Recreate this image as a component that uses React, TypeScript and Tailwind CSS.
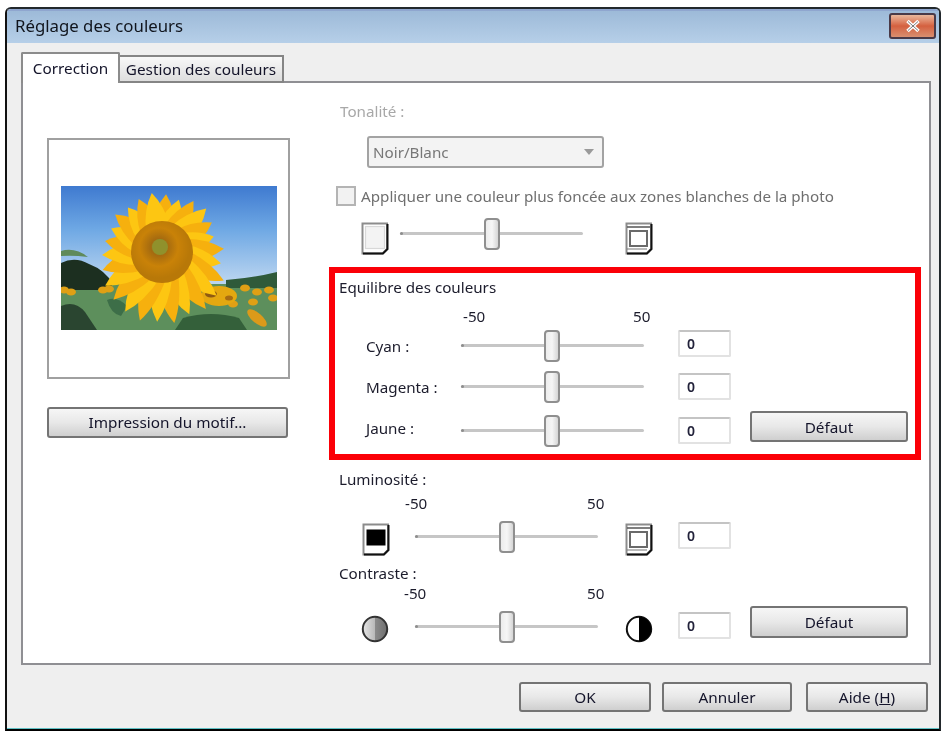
import type { ReactNode } from "react";

const FONT = "font-['Noto_Sans','DejaVu_Sans',sans-serif]";

const Btn = ({ className, children }: { className: string; children: ReactNode }) => (
  <div className={`flex items-center justify-center rounded-[3px] border-2 border-[#747474] bg-gradient-to-b from-[#f6f6f6] via-[#e8e8e8] to-[#cfcfcf] text-[15.3px] text-[#14142a] ${className}`}>
    {children}
  </div>
);

const Slider = ({ className, thumb }: { className: string; thumb: string }) => (
  <div className={`relative h-[32px] ${className}`}>
    <div className="absolute inset-x-0 top-[14px] h-[3px] rounded-full bg-[#c6c6c6]" />
    <div className="absolute left-0 top-[14px] h-[3px] w-[3px] rounded-full bg-[#8e8e8e]" />
    <div className={`absolute top-0 h-[32px] w-[16px] rounded-[4px] border-2 border-[#8f8f8f] bg-gradient-to-r from-[#ececec] via-[#f6f6f6] to-[#d6d6d6] ${thumb}`} />
  </div>
);

const ValueBox = ({ className }: { className: string }) => (
  <div className={`flex h-[27px] w-[53px] items-center rounded-[2px] border-2 border-[#e2e2e2] border-t-[#c4c4c4] bg-white pl-[7px] text-[14px] font-semibold text-[#22223a] ${className}`}>
    0
  </div>
);

const Page = ({ dark, filled }: { dark?: boolean; filled?: boolean }) => (
  <svg width="28" height="33" viewBox="0 0 28 33" className="shrink-0">
    <path d="M1.5 1.5 H26 V27 L21.5 31.5 H1.5 Z" fill="#fff" stroke="#8c8c8c" strokeWidth="2" />
    <path d="M26.5 2 V27 L22 31.5 H2" fill="none" stroke="#111" strokeWidth="2" />
    {filled && <rect x="4.5" y="6.5" width="19" height="16" fill="#000" />}
    {dark && (
      <>
        <path d="M2 5 H25" stroke="#555" strokeWidth="1.6" />
        <rect x="5" y="9" width="17" height="15" fill="#fff" stroke="#6a6a6a" strokeWidth="2" />
        <path d="M2 27 H22" stroke="#777" strokeWidth="1.2" />
      </>
    )}
    {!dark && !filled && <rect x="4.5" y="4.5" width="19" height="22" fill="#f3f3f3" stroke="#d8d8d8" strokeWidth="1.2" />}
  </svg>
);

const HalfCircle = ({ soft }: { soft?: boolean }) => (
  <svg width="28" height="28" viewBox="0 0 28 28" className="shrink-0">
    <defs>
      <linearGradient id="softc" x1="0" x2="1" y1="0" y2="0">
        <stop offset="0" stopColor="#e6e6e6" />
        <stop offset="0.5" stopColor="#b8b8b8" />
        <stop offset="0.5" stopColor="#8b8b8b" />
        <stop offset="1" stopColor="#6f6f6f" />
      </linearGradient>
    </defs>
    {soft ? (
      <circle cx="14" cy="14" r="12.2" fill="url(#softc)" stroke="#333" strokeWidth="2" />
    ) : (
      <>
        <circle cx="14" cy="14" r="12.2" fill="#fff" stroke="#111" strokeWidth="2" />
        <path d="M14 1.8 A12.2 12.2 0 0 1 14 26.2 Z" fill="#000" />
      </>
    )}
  </svg>
);

// petal length per angle, longer towards the lower right like the photo
const petalLens = [58, 55, 60, 62, 58, 54, 62, 60, 68, 70, 72, 68, 72, 70, 72, 70, 68, 66, 62, 60, 58, 56, 60, 56, 58, 60];

const Sunflower = () => (
  <svg width="216" height="144" viewBox="0 0 216 144" className="block">
    <defs>
      <linearGradient id="sky" x1="0" x2="0" y1="0" y2="1">
        <stop offset="0" stopColor="#3f7ad0" />
        <stop offset="0.3" stopColor="#6ea8e4" />
        <stop offset="0.66" stopColor="#b9d4f0" />
      </linearGradient>
      <radialGradient id="disc" cx="0.45" cy="0.42">
        <stop offset="0" stopColor="#a3a032" />
        <stop offset="0.26" stopColor="#a46a10" />
        <stop offset="0.62" stopColor="#c98208" />
        <stop offset="1" stopColor="#b87808" />
      </radialGradient>
    </defs>
    <rect width="216" height="144" fill="url(#sky)" />
    <path d="M0 98 H216 V144 H0 Z" fill="#5d8f5c" />
    <path d="M0 77 Q14 70 28 78 Q44 84 52 98 L46 104 H0 Z" fill="#1c2f20" />
    <path d="M0 65 Q14 61 27 71 Q12 69 0 70 Z" fill="#5f8a5a" />
    <path d="M165 94 Q192 92 216 86 V102 H165 Z" fill="#2f5a3a" />
    <path d="M0 120 Q14 114 24 126 L36 144 H0 Z" fill="#2a4530" />
    <path d="M46 114 Q56 110 66 120 L60 130 Q50 128 46 114 Z" fill="#3d6e48" />
    <path d="M122 132 Q150 124 178 132 L186 144 H114 Z" fill="#34603a" />
    {[[3, 104], [10, 106], [42, 104], [48, 103], [184, 102], [196, 106], [208, 104], [212, 112], [192, 116], [172, 118]].map(([x, y], i) => (
      <ellipse key={i} cx={x} cy={y} rx="5" ry="3.5" fill="#dfa015" />
    ))}
    <ellipse cx="196" cy="132" rx="12" ry="5" transform="rotate(40 196 132)" fill="#dc9a1a" />
    <ellipse cx="158" cy="110" rx="18" ry="10" fill="#e4a810" />
    <ellipse cx="150" cy="108" rx="6" ry="3.5" fill="#8f5a12" />
    <ellipse cx="168" cy="112" rx="4" ry="2.5" fill="#a86c12" />
    {petalLens.map((len, i) => (
      <path
        key={i}
        d={`M-12 -24 Q-11 ${-len * 0.74} 0 ${-len} Q11 ${-len * 0.74} 12 -24 Z`}
        transform={`translate(101 66) rotate(${(i * 360) / 26 + 4})`}
        fill={i % 2 ? "#fdc612" : "#f6b00e"}
      />
    ))}
    <circle cx="101" cy="66" r="31" fill="url(#disc)" />
    <circle cx="99" cy="61" r="8" fill="#90912c" />
  </svg>
);

export default function App() {
  return (
    <div className={`h-[737px] w-[948px] bg-white pl-[5px] pt-[7px] blur-[0.4px] ${FONT}`}>
      <div className="flex h-[724px] w-[936px] flex-col overflow-hidden rounded-t-[6px] border-2 border-[#22282c] border-b-black border-l-[#111]">
        {/* title bar */}
        <div className="flex h-[34px] shrink-0 items-start justify-between border-t-2 border-[#8fa6cf] bg-gradient-to-b from-[#9dbad8] to-[#b6cfe8] pl-[8px]">
          <span className="mt-[5px] text-[16.8px] leading-[20px] text-[#10141c]">Réglage des couleurs</span>
          <div className="mr-[3px] mt-[2px] flex h-[26px] w-[47px] items-center justify-center rounded-[3px] border-2 border-[#4a3a48] bg-gradient-to-b from-[#e9b89d] via-[#d4603f] to-[#d98f70]">
            <svg width="16" height="14" viewBox="0 0 16 14">
              <path d="M2.5 2 L13.5 12 M13.5 2 L2.5 12" stroke="#fff" strokeWidth="3.6" />
              <path d="M3 2.5 L13 11.5 M13 2.5 L3 11.5" stroke="#555" strokeWidth="0.8" />
            </svg>
          </div>
        </div>

        {/* dialog body */}
        <div className="flex flex-1 flex-col border-b border-[#5fc0c4] bg-[#efefef] pl-[14px] pr-[8px]">
          <div className="relative z-10 -mb-[2px] flex h-[40px] items-end">
            <div className="flex h-[31px] w-[99px] items-start justify-center rounded-t-[2px] border-2 border-b-0 border-[#8c8c8c] bg-white pt-[4px] text-[15.3px] leading-[20px] text-[#14142a]">
              Correction
            </div>
            <div className="flex h-[28px] w-[164px] items-start justify-center border-2 border-l-0 border-[#858585] bg-gradient-to-b from-[#f8f8f8] to-[#dedede] pt-[2px] text-[15.3px] leading-[20px] text-[#14142a]">
              Gestion des couleurs
            </div>
          </div>

          <div className="flex h-[584px] w-[910px] border-2 border-[#8f8f93] bg-white">
            {/* preview column */}
            <div className="ml-[24px] w-[243px] shrink-0">
              <div className="mt-[55px] flex h-[241px] w-[243px] items-center justify-center border-2 border-[#a0a0a0] bg-white pb-[1px] pl-[1px]">
                <Sunflower />
              </div>
              <Btn className="mt-[28px] h-[31px] w-[241px]">Impression du motif...</Btn>
            </div>

            {/* settings column */}
            <div className="ml-[39px] flex w-[592px] flex-col text-[15.2px] leading-[16px] text-[#1c1c2c]">
              <div className="ml-[11px] mt-[20px] h-[16px] text-[#a8a8a8]">Tonalité :</div>
              <div className="ml-[38px] mt-[17px] flex h-[32px] w-[237px] items-center justify-between rounded-[3px] border-2 border-[#a3a3a3] bg-[#f3f3f3] pl-[4px] pr-[8px] text-[#777]">
                Noir/Blanc
                <svg width="10" height="6" viewBox="0 0 10 6"><path d="M0 0 H10 L5 6 Z" fill="#9a9a9a" /></svg>
              </div>
              <div className="ml-[7px] mt-[18px] flex h-[20px] items-center text-[#6f6f6f]">
                <div className="h-[20px] w-[20px] shrink-0 border-2 border-[#b4b4b4] bg-[#f2f2f2]" />
                <span className="ml-[5px] whitespace-nowrap">Appliquer une couleur plus foncée aux zones blanches de la photo</span>
              </div>
              <div className="mt-[12px] flex h-[37px] items-start">
                <div className="ml-[32px] mt-[4px]"><Page /></div>
                <Slider className="ml-[11px] w-[183px]" thumb="left-[84px]" />
                <div className="ml-[42px] mt-[4px]"><Page dark /></div>
              </div>

              {/* highlighted group */}
              <div className="mt-[12px] flex h-[193px] w-[592px] flex-col border-[6px] border-[#fb0007]">
                <div className="ml-[4px] mt-[6px] h-[16px]">Equilibre des couleurs</div>
                <div className="mt-[13px] flex h-[16px]">
                  <span className="ml-[128px] w-[170px]">-50</span>
                  <span>50</span>
                </div>
                <div className="mt-[6px] flex h-[32px] items-start">
                  <span className="ml-[31px] mt-[8px] w-[95px]">Cyan :</span>
                  <Slider className="w-[183px]" thumb="left-[83px]" />
                  <ValueBox className="ml-[34px]" />
                </div>
                <div className="mt-[9px] flex h-[32px] items-start">
                  <span className="ml-[31px] mt-[8px] w-[95px]">Magenta :</span>
                  <Slider className="w-[183px]" thumb="left-[83px]" />
                  <ValueBox className="ml-[34px] mt-[2px]" />
                </div>
                <div className="mt-[8px] flex h-[36px] items-start">
                  <span className="ml-[31px] mt-[9px] w-[95px]">Jaune :</span>
                  <Slider className="mt-[4px] w-[183px]" thumb="left-[83px]" />
                  <ValueBox className="ml-[34px] mt-[6px]" />
                  <Btn className="ml-[19px] h-[31px] w-[158px]">Défaut</Btn>
                </div>
              </div>

              <div className="ml-[10px] mt-[11px] h-[16px]">Luminosité :</div>
              <div className="mt-[8px] flex h-[16px]">
                <span className="ml-[76px] w-[182px]">-50</span>
                <span>50</span>
              </div>
              <div className="mt-[10px] flex h-[35px] items-start">
                <div className="ml-[33px] mt-[2px]"><Page filled /></div>
                <Slider className="ml-[25px] w-[183px]" thumb="left-[84px]" />
                <div className="ml-[27px] mt-[2px]"><Page dark /></div>
                <ValueBox className="ml-[25px] mt-[1px]" />
              </div>
              <div className="ml-[10px] mt-[9px] h-[16px]">Contraste :</div>
              <div className="mt-[4px] flex h-[16px]">
                <span className="ml-[75px] w-[183px]">-50</span>
                <span>50</span>
              </div>
              <div className="mt-[5px] flex h-[37px] items-start">
                <div className="ml-[32px] mt-[9px]"><HalfCircle soft /></div>
                <Slider className="ml-[26px] mt-[5px] w-[183px]" thumb="left-[84px]" />
                <div className="ml-[27px] mt-[9px]"><HalfCircle /></div>
                <ValueBox className="ml-[25px] mt-[6px]" />
                <Btn className="ml-[19px] h-[32px] w-[158px]">Défaut</Btn>
              </div>
            </div>
          </div>

          <div className="mt-[17px] flex justify-end pr-[3px]">
            <Btn className="h-[30px] w-[132px]">OK</Btn>
            <Btn className="ml-[11px] h-[30px] w-[130px]">Annuler</Btn>
            <Btn className="ml-[14px] h-[30px] w-[122px]">
              <span>Aide (<span className="underline">H</span>)</span>
            </Btn>
          </div>
        </div>
      </div>
    </div>
  );
}
